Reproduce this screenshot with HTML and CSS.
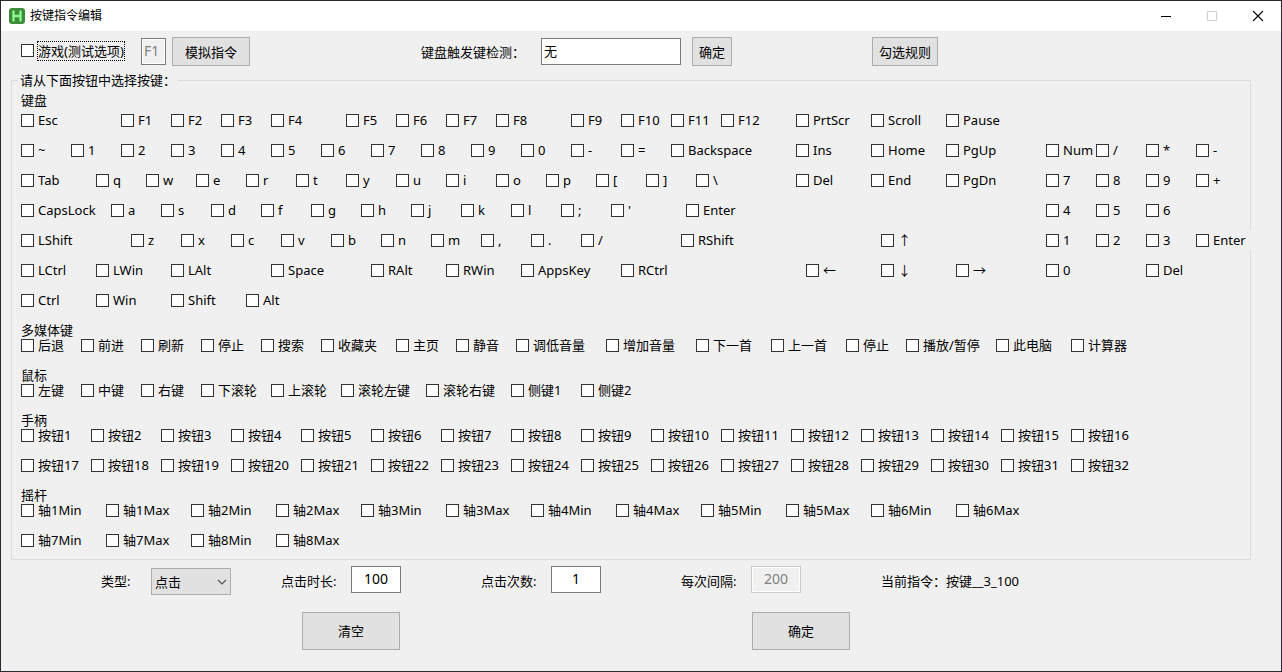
FILE: index.html
```html
<!DOCTYPE html>
<html lang="zh-CN">
<head>
<meta charset="utf-8">
<title>按键指令编辑</title>
<link rel="stylesheet" href="styles.css">
</head>
<body>
<div class="window">
<header class="titlebar">
  <svg class="app-icon" width="16" height="16" viewBox="0 0 16 16" aria-hidden="true"><rect width="16" height="16" rx="3" fill="#3c8c3c"/><path d="M4.500 3.500v9M11.500 3.500v9M4.500 8h7" fill="none" stroke="#8df58d" stroke-width="2.400" stroke-linecap="round"/></svg>
  <h1 class="title">按键指令编辑</h1>
  <button class="caption-button" type="button" aria-label="最小化"><svg width="12" height="12" viewBox="0 0 12 12"><path d="M1 6.500h10" stroke="#000"/></svg></button>
  <button class="caption-button" type="button" aria-label="最大化" disabled><svg width="12" height="12" viewBox="0 0 12 12"><path d="M1.500 1.500h9v9h-9z" fill="none" stroke="#ccc"/></svg></button>
  <button class="caption-button" type="button" aria-label="关闭"><svg width="12" height="12" viewBox="0 0 12 12"><path d="M1 1l10 10M11 1L1 11" stroke="#000" stroke-width="1.100"/></svg></button>
</header>
<main>
<div class="toolbar">
  <label class="key game"><input type="checkbox"><span class="focused">游戏(测试选项)</span></label>
  <input class="field hotkey" type="text" value="F1" aria-label="热键" disabled>
  <button class="button simulate" type="button">模拟指令</button>
  <label for="trigger">键盘触发键检测：</label>
  <input class="field trigger" id="trigger" type="text" value="无">
  <button class="button" type="button">确定</button>
  <button class="button" type="button">勾选规则</button>
</div>
<fieldset class="group">
<legend class="legend">请从下面按钮中选择按键：</legend>
<section class="section">
  <h2 class="heading">键盘</h2>
  <div class="rows">
    <div class="row">
      <label class="key w100"><input type="checkbox">Esc</label>
      <label class="key"><input type="checkbox">F1</label>
      <label class="key"><input type="checkbox">F2</label>
      <label class="key"><input type="checkbox">F3</label>
      <label class="key w75"><input type="checkbox">F4</label>
      <label class="key"><input type="checkbox">F5</label>
      <label class="key"><input type="checkbox">F6</label>
      <label class="key"><input type="checkbox">F7</label>
      <label class="key w75"><input type="checkbox">F8</label>
      <label class="key"><input type="checkbox">F9</label>
      <label class="key"><input type="checkbox">F10</label>
      <label class="key"><input type="checkbox">F11</label>
      <label class="key w75"><input type="checkbox">F12</label>
      <label class="key w75"><input type="checkbox">PrtScr</label>
      <label class="key w75"><input type="checkbox">Scroll</label>
      <label class="key w75"><input type="checkbox">Pause</label>
    </div>
    <div class="row">
      <label class="key"><input type="checkbox">~</label>
      <label class="key"><input type="checkbox">1</label>
      <label class="key"><input type="checkbox">2</label>
      <label class="key"><input type="checkbox">3</label>
      <label class="key"><input type="checkbox">4</label>
      <label class="key"><input type="checkbox">5</label>
      <label class="key"><input type="checkbox">6</label>
      <label class="key"><input type="checkbox">7</label>
      <label class="key"><input type="checkbox">8</label>
      <label class="key"><input type="checkbox">9</label>
      <label class="key"><input type="checkbox">0</label>
      <label class="key"><input type="checkbox">-</label>
      <label class="key"><input type="checkbox">=</label>
      <label class="key w125"><input type="checkbox">Backspace</label>
      <label class="key w75"><input type="checkbox">Ins</label>
      <label class="key w75"><input type="checkbox">Home</label>
      <label class="key w100"><input type="checkbox">PgUp</label>
      <label class="key"><input type="checkbox">Num</label>
      <label class="key"><input type="checkbox">/</label>
      <label class="key"><input type="checkbox">*</label>
      <label class="key"><input type="checkbox">-</label>
    </div>
    <div class="row">
      <label class="key w75"><input type="checkbox">Tab</label>
      <label class="key"><input type="checkbox">q</label>
      <label class="key"><input type="checkbox">w</label>
      <label class="key"><input type="checkbox">e</label>
      <label class="key"><input type="checkbox">r</label>
      <label class="key"><input type="checkbox">t</label>
      <label class="key"><input type="checkbox">y</label>
      <label class="key"><input type="checkbox">u</label>
      <label class="key"><input type="checkbox">i</label>
      <label class="key"><input type="checkbox">o</label>
      <label class="key"><input type="checkbox">p</label>
      <label class="key"><input type="checkbox">[</label>
      <label class="key"><input type="checkbox">]</label>
      <label class="key w100"><input type="checkbox">\</label>
      <label class="key w75"><input type="checkbox">Del</label>
      <label class="key w75"><input type="checkbox">End</label>
      <label class="key w100"><input type="checkbox">PgDn</label>
      <label class="key"><input type="checkbox">7</label>
      <label class="key"><input type="checkbox">8</label>
      <label class="key"><input type="checkbox">9</label>
      <label class="key"><input type="checkbox">+</label>
    </div>
    <div class="row">
      <label class="key w90"><input type="checkbox">CapsLock</label>
      <label class="key"><input type="checkbox">a</label>
      <label class="key"><input type="checkbox">s</label>
      <label class="key"><input type="checkbox">d</label>
      <label class="key"><input type="checkbox">f</label>
      <label class="key"><input type="checkbox">g</label>
      <label class="key"><input type="checkbox">h</label>
      <label class="key"><input type="checkbox">j</label>
      <label class="key"><input type="checkbox">k</label>
      <label class="key"><input type="checkbox">l</label>
      <label class="key"><input type="checkbox">;</label>
      <label class="key w75"><input type="checkbox">'</label>
      <label class="key w360"><input type="checkbox">Enter</label>
      <label class="key"><input type="checkbox">4</label>
      <label class="key"><input type="checkbox">5</label>
      <label class="key"><input type="checkbox">6</label>
    </div>
    <div class="row">
      <label class="key w110"><input type="checkbox">LShift</label>
      <label class="key"><input type="checkbox">z</label>
      <label class="key"><input type="checkbox">x</label>
      <label class="key"><input type="checkbox">c</label>
      <label class="key"><input type="checkbox">v</label>
      <label class="key"><input type="checkbox">b</label>
      <label class="key"><input type="checkbox">n</label>
      <label class="key"><input type="checkbox">m</label>
      <label class="key"><input type="checkbox">,</label>
      <label class="key"><input type="checkbox">.</label>
      <label class="key w100"><input type="checkbox">/</label>
      <label class="key w200"><input type="checkbox">RShift</label>
      <label class="key w165"><input type="checkbox">↑</label>
      <label class="key"><input type="checkbox">1</label>
      <label class="key"><input type="checkbox">2</label>
      <label class="key"><input type="checkbox">3</label>
      <label class="key w60 opaque"><input type="checkbox">Enter</label>
    </div>
    <div class="row">
      <label class="key w75"><input type="checkbox">LCtrl</label>
      <label class="key w75"><input type="checkbox">LWin</label>
      <label class="key w100"><input type="checkbox">LAlt</label>
      <label class="key w100"><input type="checkbox">Space</label>
      <label class="key w75"><input type="checkbox">RAlt</label>
      <label class="key w75"><input type="checkbox">RWin</label>
      <label class="key w100"><input type="checkbox">AppsKey</label>
      <label class="key w185"><input type="checkbox">RCtrl</label>
      <label class="key w75"><input type="checkbox">←</label>
      <label class="key w75"><input type="checkbox">↓</label>
      <label class="key w90"><input type="checkbox">→</label>
      <label class="key w100"><input type="checkbox">0</label>
      <label class="key"><input type="checkbox">Del</label>
    </div>
    <div class="row">
      <label class="key w75"><input type="checkbox">Ctrl</label>
      <label class="key w75"><input type="checkbox">Win</label>
      <label class="key w75"><input type="checkbox">Shift</label>
      <label class="key w75"><input type="checkbox">Alt</label>
    </div>
  </div>
</section>
<section class="section">
  <h2 class="heading snug">多媒体键</h2>
  <div class="rows">
    <div class="row">
      <label class="key w60"><input type="checkbox">后退</label>
      <label class="key w60"><input type="checkbox">前进</label>
      <label class="key w60"><input type="checkbox">刷新</label>
      <label class="key w60"><input type="checkbox">停止</label>
      <label class="key w60"><input type="checkbox">搜索</label>
      <label class="key w75"><input type="checkbox">收藏夹</label>
      <label class="key w60"><input type="checkbox">主页</label>
      <label class="key w60"><input type="checkbox">静音</label>
      <label class="key w90"><input type="checkbox">调低音量</label>
      <label class="key w90"><input type="checkbox">增加音量</label>
      <label class="key w75"><input type="checkbox">下一首</label>
      <label class="key w75"><input type="checkbox">上一首</label>
      <label class="key w60"><input type="checkbox">停止</label>
      <label class="key w90"><input type="checkbox">播放/暂停</label>
      <label class="key w75"><input type="checkbox">此电脑</label>
      <label class="key w75"><input type="checkbox">计算器</label>
    </div>
  </div>
</section>
<section class="section">
  <h2 class="heading snug">鼠标</h2>
  <div class="rows">
    <div class="row">
      <label class="key w60"><input type="checkbox">左键</label>
      <label class="key w60"><input type="checkbox">中键</label>
      <label class="key w60"><input type="checkbox">右键</label>
      <label class="key w70"><input type="checkbox">下滚轮</label>
      <label class="key w70"><input type="checkbox">上滚轮</label>
      <label class="key w85"><input type="checkbox">滚轮左键</label>
      <label class="key w85"><input type="checkbox">滚轮右键</label>
      <label class="key w70"><input type="checkbox">侧键1</label>
      <label class="key w70"><input type="checkbox">侧键2</label>
    </div>
  </div>
</section>
<section class="section">
  <h2 class="heading snug">手柄</h2>
  <div class="rows">
    <div class="row">
      <label class="key w70"><input type="checkbox">按钮1</label>
      <label class="key w70"><input type="checkbox">按钮2</label>
      <label class="key w70"><input type="checkbox">按钮3</label>
      <label class="key w70"><input type="checkbox">按钮4</label>
      <label class="key w70"><input type="checkbox">按钮5</label>
      <label class="key w70"><input type="checkbox">按钮6</label>
      <label class="key w70"><input type="checkbox">按钮7</label>
      <label class="key w70"><input type="checkbox">按钮8</label>
      <label class="key w70"><input type="checkbox">按钮9</label>
      <label class="key w70"><input type="checkbox">按钮10</label>
      <label class="key w70"><input type="checkbox">按钮11</label>
      <label class="key w70"><input type="checkbox">按钮12</label>
      <label class="key w70"><input type="checkbox">按钮13</label>
      <label class="key w70"><input type="checkbox">按钮14</label>
      <label class="key w70"><input type="checkbox">按钮15</label>
      <label class="key w70"><input type="checkbox">按钮16</label>
    </div>
    <div class="row">
      <label class="key w70"><input type="checkbox">按钮17</label>
      <label class="key w70"><input type="checkbox">按钮18</label>
      <label class="key w70"><input type="checkbox">按钮19</label>
      <label class="key w70"><input type="checkbox">按钮20</label>
      <label class="key w70"><input type="checkbox">按钮21</label>
      <label class="key w70"><input type="checkbox">按钮22</label>
      <label class="key w70"><input type="checkbox">按钮23</label>
      <label class="key w70"><input type="checkbox">按钮24</label>
      <label class="key w70"><input type="checkbox">按钮25</label>
      <label class="key w70"><input type="checkbox">按钮26</label>
      <label class="key w70"><input type="checkbox">按钮27</label>
      <label class="key w70"><input type="checkbox">按钮28</label>
      <label class="key w70"><input type="checkbox">按钮29</label>
      <label class="key w70"><input type="checkbox">按钮30</label>
      <label class="key w70"><input type="checkbox">按钮31</label>
      <label class="key w70"><input type="checkbox">按钮32</label>
    </div>
  </div>
</section>
<section class="section">
  <h2 class="heading snug">摇杆</h2>
  <div class="rows">
    <div class="row">
      <label class="key w85"><input type="checkbox">轴1Min</label>
      <label class="key w85"><input type="checkbox">轴1Max</label>
      <label class="key w85"><input type="checkbox">轴2Min</label>
      <label class="key w85"><input type="checkbox">轴2Max</label>
      <label class="key w85"><input type="checkbox">轴3Min</label>
      <label class="key w85"><input type="checkbox">轴3Max</label>
      <label class="key w85"><input type="checkbox">轴4Min</label>
      <label class="key w85"><input type="checkbox">轴4Max</label>
      <label class="key w85"><input type="checkbox">轴5Min</label>
      <label class="key w85"><input type="checkbox">轴5Max</label>
      <label class="key w85"><input type="checkbox">轴6Min</label>
      <label class="key w85"><input type="checkbox">轴6Max</label>
    </div>
    <div class="row">
      <label class="key w85"><input type="checkbox">轴7Min</label>
      <label class="key w85"><input type="checkbox">轴7Max</label>
      <label class="key w85"><input type="checkbox">轴8Min</label>
      <label class="key w85"><input type="checkbox">轴8Max</label>
    </div>
  </div>
</section>
</fieldset>
<div class="options">
  <label for="type">类型:</label>
  <div class="select-box">
    <select class="select" id="type"><option>点击</option></select>
    <svg class="chevron" width="10" height="6" viewBox="0 0 10 6" aria-hidden="true"><path d="M1 1l4 4 4-4" fill="none" stroke="#555" stroke-width="1.200"/></svg>
  </div>
  <label for="duration">点击时长:</label>
  <input class="field number" id="duration" type="text" value="100">
  <label for="count">点击次数:</label>
  <input class="field number" id="count" type="text" value="1">
  <label for="interval">每次间隔:</label>
  <input class="field number faded" id="interval" type="text" value="200" disabled>
  <output>当前指令：按键__3_100</output>
</div>
<div class="actions">
  <button class="button large" type="button">清空</button>
  <button class="button large" type="button">确定</button>
</div>
</main>
</div>
</body>
</html>
```

FILE: styles.css
```css
* { box-sizing: border-box; }

body {
  margin: 0;
  color: #000;
  background: #f0f0f0;
  font: 13px/20px "Noto Sans", "Noto Sans CJK SC", sans-serif;
}

input, button, select { margin: 0; color: inherit; font: inherit; }

.window { min-height: 100vh; border: 1px solid #2b2830; }

.titlebar {
  display: flex;
  align-items: center;
  height: 30px;
  padding-left: 8px;
  background: #fff;
}
.app-icon { margin-right: 5px; }
.title { flex: 1; margin: 0; font-size: 12px; font-weight: 400; }
.caption-button {
  display: flex;
  align-items: center;
  justify-content: center;
  width: 46px;
  height: 30px;
  padding: 0;
  border: 0;
  background: none;
}

.toolbar {
  display: grid;
  grid-template-columns: 120px 31px 249px 120px 151px 180px auto;
  align-items: center;
  justify-content: start;
  padding: 6px 0 4px 20px;
}
.toolbar .game { align-self: start; width: auto; height: 27px; gap: 3px; }
.focused { height: 20px; padding: 0 1px; outline: 1px dotted #000; outline-offset: -1px; }

.field {
  height: 27px;
  padding: 0 2px 2px;
  border: 1px solid #7a7a7a;
  border-radius: 0;
  background: #fff;
}
.field:disabled { color: #808080; background: #f0f0f0; box-shadow: inset 0 0 0 1px #fff; }
.hotkey { width: 25px; font-size: 14px; }
.trigger { width: 140px; }
.number { align-self: start; width: 50px; font-size: 14px; text-align: center; }
.faded { border-color: #ccc; }

.button {
  justify-self: start;
  height: 29px;
  padding: 0 6px;
  border: 1px solid #adadad;
  background: #e1e1e1;
}
.simulate { padding: 0 12px; }
.large { width: 98px; height: 38px; }

.group {
  min-width: 0;
  margin: 0 30px 0 10px;
  padding: 0 0 9px 6px;
  border: 1px solid #dcdcdc;
}
.legend { padding: 0 2px; }
.section { padding-left: 3px; }
.section + .section { margin-top: 10px; }
.heading { margin: 0; font-size: 13px; font-weight: 400; line-height: 20px; }
.heading.snug { margin-bottom: -5px; }
.rows { display: grid; gap: 10px; }
.row { display: flex; }

.key {
  display: flex;
  flex: none;
  align-items: center;
  gap: 4px;
  width: 50px;
  height: 20px;
  white-space: nowrap;
}
.key input {
  appearance: none;
  flex: none;
  width: 13px;
  height: 13px;
  border: 1px solid #333;
  background: #fff;
}
.key input:checked { background: #333; box-shadow: inset 0 0 0 2px #fff; }
.opaque { background: #f0f0f0; }
.w60 { width: 60px; }
.w70 { width: 70px; }
.w75 { width: 75px; }
.w85 { width: 85px; }
.w90 { width: 90px; }
.w100 { width: 100px; }
.w110 { width: 110px; }
.w125 { width: 125px; }
.w165 { width: 165px; }
.w185 { width: 185px; }
.w200 { width: 200px; }
.w360 { width: 360px; }

.options {
  display: grid;
  grid-template-columns: 50px 130px 70px 130px 70px 130px 70px 130px auto;
  align-items: center;
  justify-content: start;
  padding: 6px 0 0 100px;
}
.select-box { position: relative; width: 80px; margin-top: 2px; }
.select {
  display: block;
  appearance: none;
  width: 100%;
  height: 27px;
  padding: 0 3px;
  border: 1px solid #adadad;
  border-radius: 0;
  background: #e1e1e1;
}
.chevron { position: absolute; top: 11px; right: 4px; pointer-events: none; }

.actions { display: flex; gap: 352px; padding: 17px 0 0 301px; }
```
